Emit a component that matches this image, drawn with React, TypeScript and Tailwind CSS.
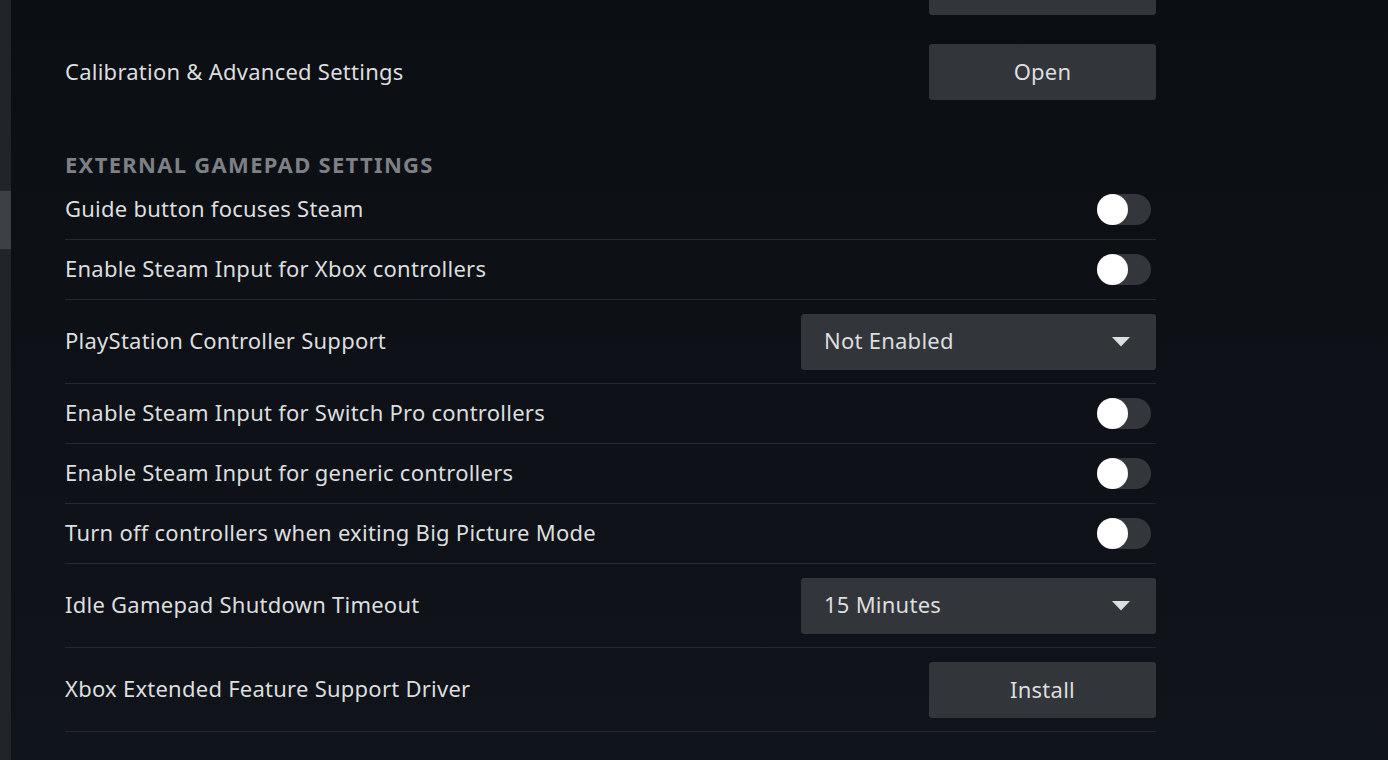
import React from "react";

const font = { fontFamily: '"Noto Sans", "Open Sans", Arial, sans-serif' };

function Toggle() {
  return (
    <div className="relative h-[31px] w-[54px] rounded-full bg-[#33363b]">
      <div className="absolute left-0 top-0 h-[31px] w-[31px] rounded-full bg-white" />
    </div>
  );
}

function Btn({ label }: { label: string }) {
  return (
    <div className="flex h-[56px] w-[227px] items-center justify-center rounded-[3px] bg-[#32353a] pb-[1px] text-[22px] tracking-[0.25px] text-[#dcdedf]">
      {label}
    </div>
  );
}

function Dropdown({ value }: { value: string }) {
  return (
    <div className="flex h-[56px] w-[355px] items-center justify-between rounded-[3px] bg-[#32353a] pl-[23px] pr-[26px] text-[22px] tracking-[0.25px] text-[#dcdedf]">
      <span className="pb-[2px]">{value}</span>
      <svg width="18" height="10" viewBox="0 0 18 10">
        <polygon points="0,0 18,0 9,9.5" fill="#dcdedf" />
      </svg>
    </div>
  );
}

function Row({
  label,
  children,
  tall,
}: {
  label: string;
  children: React.ReactNode;
  tall?: boolean;
}) {
  return (
    <div
      className={`flex items-center justify-between border-b border-[#26292e] ${
        tall ? "h-[84px]" : "h-[60px]"
      }`}
    >
      <span className="pb-[2px] text-[22px] tracking-[0.25px] text-[#dcdedf]">{label}</span>
      <div className={tall ? "" : "pr-[5px]"}>{children}</div>
    </div>
  );
}

export default function App() {
  return (
    <div
      className="flex h-[760px] w-full overflow-hidden bg-gradient-to-b from-[#0b0e12] to-[#10141b]"
      style={font}
    >
      <div className="h-full w-[11px] shrink-0 bg-[#212428] pt-[191px]">
        <div className="h-[58px] w-full bg-[#3d4045]" />
      </div>
      <div className="ml-[54px] w-[1091px] shrink-0">
        <div className="mt-[-41px] flex justify-end">
          <Btn label="" />
        </div>
        <div className="mt-[29px] flex h-[56px] items-center justify-between">
          <span className="pb-[2px] text-[22px] tracking-[0.25px] text-[#dcdedf]">
            Calibration &amp; Advanced Settings
          </span>
          <Btn label="Open" />
        </div>
        <div className="mt-[50px] flex h-[28px] items-center text-[22px] font-bold uppercase tracking-[1.3px] text-[#7d8185]">
          External Gamepad Settings
        </div>
        <div className="mt-[2px]">
          <Row label="Guide button focuses Steam">
            <Toggle />
          </Row>
          <Row label="Enable Steam Input for Xbox controllers">
            <Toggle />
          </Row>
          <Row label="PlayStation Controller Support" tall>
            <Dropdown value="Not Enabled" />
          </Row>
          <Row label="Enable Steam Input for Switch Pro controllers">
            <Toggle />
          </Row>
          <Row label="Enable Steam Input for generic controllers">
            <Toggle />
          </Row>
          <Row label="Turn off controllers when exiting Big Picture Mode">
            <Toggle />
          </Row>
          <Row label="Idle Gamepad Shutdown Timeout" tall>
            <Dropdown value="15 Minutes" />
          </Row>
          <Row label="Xbox Extended Feature Support Driver" tall>
            <Btn label="Install" />
          </Row>
        </div>
      </div>
    </div>
  );
}
